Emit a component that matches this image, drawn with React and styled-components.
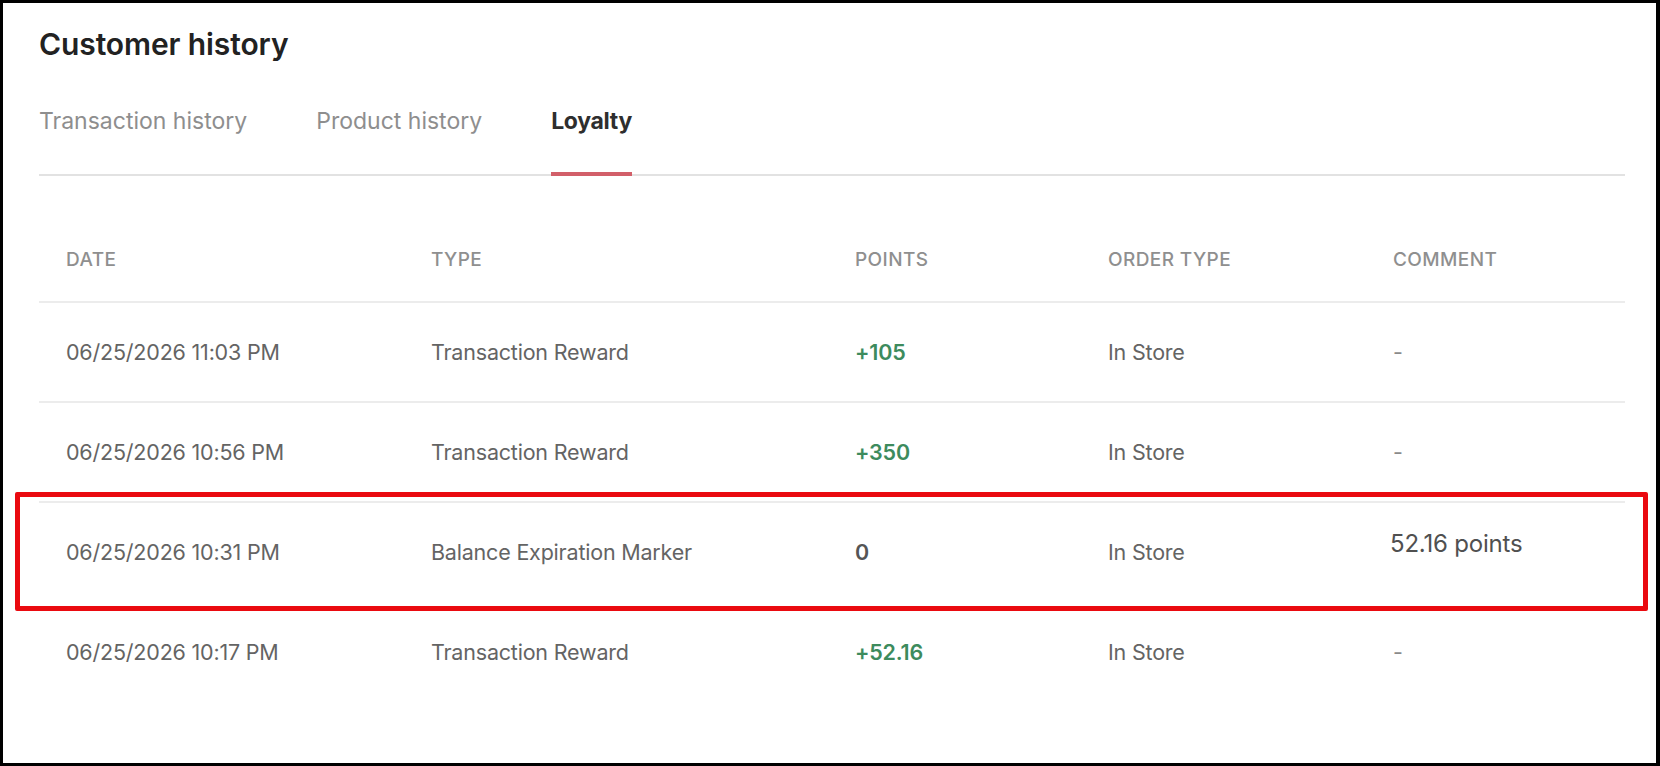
import React from 'react'
import styled, { createGlobalStyle } from 'styled-components'

const GlobalStyle = createGlobalStyle`
	html, body {
		margin: 0;
		padding: 0;
		background: #000;
	}
	body {
		font-family: Inter, "Noto Sans", "Liberation Sans", sans-serif;
	}
`

const rows = [
	{ date: '06/25/2026 11:03 PM', type: 'Transaction Reward', points: '+105', order: 'In Store', comment: '-' },
	{ date: '06/25/2026 10:56 PM', type: 'Transaction Reward', points: '+350', order: 'In Store', comment: '-' },
	{ date: '06/25/2026 10:31 PM', type: 'Balance Expiration Marker', points: '0', order: 'In Store', comment: '52.16 points', marked: true },
	{ date: '06/25/2026 10:17 PM', type: 'Transaction Reward', points: '+52.16', order: 'In Store', comment: '-' },
]

const App = () => {
	return (
		<>
			<GlobalStyle />
			<Frame>
				<Title>Customer history</Title>
				<TabList>
					<Tab>Transaction history</Tab>
					<Tab>Product history</Tab>
					<Tab active>Loyalty</Tab>
				</TabList>
				<Table>
					<HeadRow>
						<HeadCell>Date</HeadCell>
						<HeadCell>Type</HeadCell>
						<HeadCell>Points</HeadCell>
						<HeadCell>Order type</HeadCell>
						<HeadCell>Comment</HeadCell>
					</HeadRow>
					{
						rows.map((row, i) => (
							<Row
								key={row.date}
								marked={row.marked}
								divided={!(i > 0 && rows[i - 1].marked)}
							>
								<Cell>{row.date}</Cell>
								<Cell>{row.type}</Cell>
								<Points positive={row.points.startsWith('+')}>{row.points}</Points>
								<Cell>{row.order}</Cell>
								<Comment note={row.comment !== '-'}>{row.comment}</Comment>
							</Row>
						))
					}
				</Table>
			</Frame>
		</>
	)
}

const Frame = styled.div`
	box-sizing: border-box;
	width: 1660px;
	height: 766px;
	border: 3px solid #000;
	border-right-width: 4px;
	background: #fff;
	padding: 23px 31px 0 36px;
	overflow: hidden;
`

const Title = styled.h1`
	margin: 0;
	font-size: 30px;
	line-height: 36px;
	font-weight: 600;
	color: #222;
	letter-spacing: -0.1px;
`

const TabList = styled.div`
	display: flex;
	gap: 69px;
	margin-top: 45px;
	border-bottom: 2px solid #e2e2e2;
`

const Tab = styled.div`
	font-size: 23px;
	line-height: 28px;
	padding-bottom: 37px;
	margin-bottom: -2px;
	border-bottom: 4px solid ${(p) => (p.active ? '#d25f69' : 'transparent')};
	color: ${(p) => (p.active ? '#2e2e2e' : '#8e8e8e')};
	font-weight: ${(p) => (p.active ? 700 : 400)};
	letter-spacing: ${(p) => (p.active ? '-0.3px' : '0')};
`

const Table = styled.div`
	margin-top: 41px;
`

const columns = `
	display: grid;
	grid-template-columns: 365px 424px 253px 285px 1fr;
	align-items: center;
	padding-left: 27px;
`

const HeadRow = styled.div`
	${columns}
	height: 84px;
	box-sizing: border-box;
`

const HeadCell = styled.div`
	font-size: 19px;
	font-weight: 500;
	text-transform: uppercase;
	color: #8f8f8f;
	letter-spacing: 0.4px;
`

const Row = styled.div`
	${columns}
	position: relative;
	height: 100px;
	box-sizing: border-box;
	border-top: 2px solid ${(p) => (p.divided ? '#ececec' : 'transparent')};

	${(p) => p.marked && `
		&::after {
			content: '';
			position: absolute;
			top: -11px;
			bottom: -10px;
			left: -24px;
			right: -23px;
			border: 5px solid #ea0a10;
			border-radius: 2px;
			pointer-events: none;
		}
	`}
`

const Cell = styled.div`
	font-size: 21.5px;
	color: #646464;
	letter-spacing: -0.2px;
`

const Points = styled(Cell)`
	font-weight: 600;
	color: ${(p) => (p.positive ? '#3d8b5d' : '#555')};
`

const Comment = styled(Cell)`
	color: ${(p) => (p.note ? '#505050' : '#8a8a8a')};
	font-size: ${(p) => (p.note ? '24px' : '21.5px')};
	margin-left: ${(p) => (p.note ? '-3px' : '0')};
	margin-bottom: ${(p) => (p.note ? '18px' : '0')};
`

export default App
